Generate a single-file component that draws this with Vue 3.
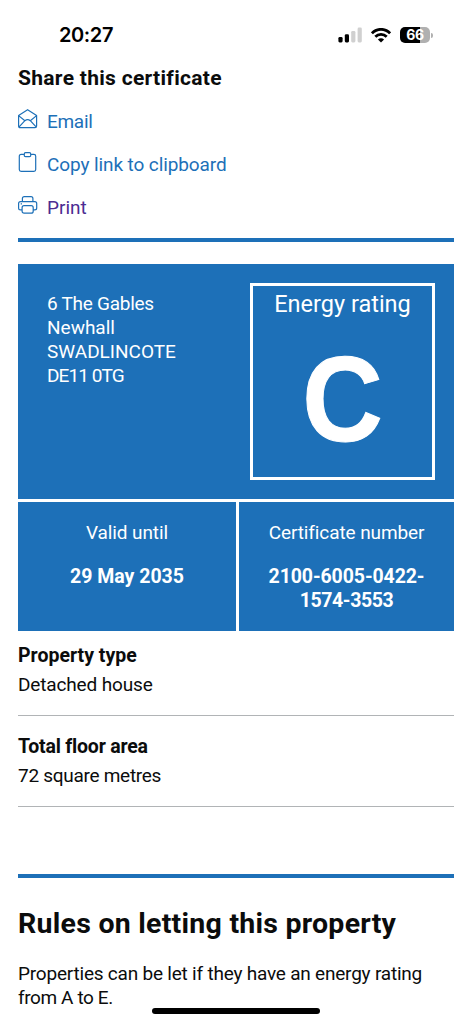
<script setup>
const address = [
  { text: '6 The Gables', name: 'street' },
  { text: 'Newhall', name: 'village' },
  { text: 'SWADLINCOTE', name: 'town' },
  { text: 'DE11 0TG', name: 'postcode' },
]
</script>

<template>
  <div class="screen">
    <header class="status">
      <span class="time">20:27</span>
      <div class="indicators">
        <svg class="signal" width="24" height="16" viewBox="0 0 24 16">
          <rect x="0.4" y="10" width="4.2" height="5.4" rx="1.3" fill="#000" />
          <rect x="6.8" y="7.2" width="4.2" height="8.2" rx="1.3" fill="#000" />
          <rect x="13.2" y="4" width="4.2" height="11.4" rx="1.3" fill="#d0d0d0" />
          <rect x="19.6" y="0.6" width="4.2" height="14.8" rx="1.3" fill="#d0d0d0" />
        </svg>
        <svg class="wifi" width="20" height="15" viewBox="0 0 20 15">
          <g fill="none" stroke="#000" stroke-width="2.8">
            <path d="M0.9 5.3C6 0 14 0 19.1 5.3" />
            <path d="M4.3 8.8C7.5 5.6 12.5 5.6 15.7 8.8" />
          </g>
          <path d="M10 14.6L6.9 11.5C8.6 9.9 11.4 9.9 13.1 11.5Z" fill="#000" />
        </svg>
        <div class="battery"><div class="cell">66</div><i class="cap"></i></div>
      </div>
    </header>

    <main>
      <h2 class="share-title">Share this certificate</h2>
      <ul class="share">
        <li>
          <svg width="20" height="20" viewBox="0 0 20 20">
            <path d="M.6 6.4L9.6.7l9 5.7v10.7q0 1.6-1.6 1.6H2.2Q.6 18.7.6 17.1ZM.6 6.6L6.9 11.7q2.7-2.1 5.4 0L18.6 6.6M.9 18.1L6.9 11.7M18.3 18.1L12.3 11.7" />
          </svg>
          <a class="email">Email</a>
        </li>
        <li>
          <svg width="20" height="20" viewBox="0 0 20 20">
            <path d="M5.7 2.4H3.1Q1.3 2.4 1.3 4.2V17.5Q1.3 19.3 3.1 19.3H15.9Q17.7 19.3 17.7 17.5V4.2Q17.7 2.4 15.9 2.4H13.3M7.5.7H11.5Q12.7.7 12.7 1.9V3.5Q12.7 4.7 11.5 4.7H7.5Q6.3 4.7 6.3 3.5V1.9Q6.3.7 7.5.7Z" />
          </svg>
          <a class="copy">Copy link to clipboard</a>
        </li>
        <li>
          <svg width="20" height="20" viewBox="0 0 20 20">
            <path d="M4.4 6.7V3.6Q4.4 1.7 6.3 1.7H13Q14.9 1.7 14.9 3.6V6.7M4.1 14.8H2.5Q.6 14.8.6 12.9V8.6Q.6 6.7 2.5 6.7H16.8Q18.7 6.7 18.7 8.6V12.9Q18.7 14.8 16.8 14.8H15.2M6.1 10.7H13.2Q15.2 10.7 15.2 12.7V16.2Q15.2 18.2 13.2 18.2H6.1Q4.1 18.2 4.1 16.2V12.7Q4.1 10.7 6.1 10.7ZM2.7 8.9H4" />
          </svg>
          <a class="print">Print</a>
        </li>
      </ul>

      <section class="certificate">
        <div class="overview">
          <address>
            <span v-for="line in address" :key="line.name" :class="line.name">{{ line.text }}</span>
          </address>
          <div class="rating">
            <p>Energy rating</p>
            <strong>C</strong>
          </div>
        </div>
        <div class="details">
          <div class="valid">
            <p>Valid until</p>
            <b>29 May 2035</b>
          </div>
          <div class="number">
            <p>Certificate number</p>
            <b>2100-6005-0422-<br /><span>1574-3553</span></b>
          </div>
        </div>
      </section>

      <dl>
        <div>
          <dt class="type">Property type</dt>
          <dd class="house">Detached house</dd>
        </div>
        <div>
          <dt class="floor">Total floor area</dt>
          <dd class="metres">72 square metres</dd>
        </div>
      </dl>

      <section class="rules">
        <h2>Rules on letting this property</h2>
        <p>Properties can be let if they have an energy rating<br /><span>from A to E.</span></p>
      </section>
    </main>
    <div class="home"></div>
  </div>
</template>

<style>
body {
  margin: 0;
  background: #fff;
}
</style>

<style scoped>
.screen {
  position: relative;
  width: 472px;
  height: 1024px;
  overflow: hidden;
  background: #fff;
  color: #0b0c0c;
  font: 19px/24px Roboto, "Open Sans", sans-serif;
}
h2, p, ul, dl, dd, address {
  margin: 0;
  padding: 0;
  font-style: normal;
}
.status {
  box-sizing: border-box;
  height: 66px;
  padding: 23px 39px 0 59px;
  display: flex;
  justify-content: space-between;
}
.time {
  font: 600 20px/25px Inter, sans-serif;
  letter-spacing: -0.4px;
  color: #000;
}
.indicators {
  display: flex;
  align-items: flex-start;
}
.signal {
  margin: 4px 9px 0 0;
}
.wifi {
  margin: 5px 9px 0 0;
}
.battery {
  display: flex;
  align-items: center;
  margin-top: 4px;
}
.cell {
  width: 30px;
  height: 16px;
  border-radius: 5px;
  background: linear-gradient(90deg, #000 66%, #b0b0b0 66%);
  color: #fff;
  font: 700 14px/16px Inter, sans-serif;
  letter-spacing: -0.4px;
  text-align: center;
}
.cap {
  width: 2px;
  height: 5px;
  margin-left: 1px;
  border-radius: 0 2px 2px 0;
  background: #b0b0b0;
}
main {
  padding: 0 18px;
}
.share-title {
  font-size: 21px;
  line-height: 24px;
  letter-spacing: 0.3px;
}
.share {
  list-style: none;
  margin-top: 19px;
  height: 129px;
}
.share li {
  display: flex;
  gap: 9px;
  height: 43px;
}
.share svg {
  flex: none;
  fill: none;
  stroke: #1d70b8;
  stroke-width: 1.2;
  stroke-linejoin: round;
}
.share a {
  padding-top: 1px;
  color: #1d70b8;
}
.share .email {
  letter-spacing: -0.3px;
}
.share .copy {
  letter-spacing: -0.1px;
}
.share .print {
  color: #4c2c92;
}
.certificate {
  border-top: 4px solid #1d70b8;
  padding-top: 22px;
  color: #fff;
}
.overview {
  display: flex;
  justify-content: space-between;
  height: 216px;
  padding: 19px 19px 0 29px;
  background: #1d70b8;
}
address {
  display: flex;
  flex-direction: column;
  padding-top: 9px;
}
.street {
  letter-spacing: -0.27px;
}
.postcode {
  letter-spacing: -0.9px;
}
.rating {
  box-sizing: border-box;
  width: 185px;
  height: 197px;
  border: 3px solid #fff;
  text-align: center;
}
.rating p {
  font-size: 23.5px;
  line-height: 30px;
  padding-top: 3px;
}
.rating strong {
  display: block;
  font: 700 120px/120px "Liberation Sans", sans-serif;
  margin-top: 20px;
  transform: scaleX(0.93);
  -webkit-text-stroke: 1px #fff;
}
.details {
  display: grid;
  grid-template-columns: 218px 1fr;
  gap: 3px;
  margin-top: 3px;
  text-align: center;
}
.details > div {
  box-sizing: border-box;
  height: 129px;
  padding-top: 19px;
  background: #1d70b8;
}
.details p {
  margin-bottom: 20px;
  letter-spacing: -0.1px;
}
.details b {
  display: block;
  font-size: 19.5px;
}
.number b {
  letter-spacing: -0.1px;
}
.number span {
  letter-spacing: -0.4px;
}
dl > div {
  box-sizing: border-box;
  height: 91px;
  border-bottom: 1px solid #b1b4b6;
  padding-top: 19px;
}
dl > div:first-child {
  height: 85px;
  padding-top: 13px;
}
dt {
  font-size: 19.5px;
  font-weight: 700;
  margin-bottom: 5px;
}
.floor {
  letter-spacing: -0.2px;
}
.house {
  letter-spacing: -0.15px;
}
.metres {
  letter-spacing: -0.28px;
}
.rules {
  margin-top: 67px;
  border-top: 4px solid #1d70b8;
  padding-top: 28px;
}
.rules h2 {
  font-size: 28.5px;
  line-height: 36px;
  letter-spacing: 0.25px;
  margin-bottom: 20px;
}
.rules p {
  white-space: nowrap;
  letter-spacing: -0.21px;
}
.rules span {
  letter-spacing: -0.4px;
}
.home {
  position: absolute;
  left: 152px;
  top: 1008px;
  width: 168px;
  height: 6px;
  border-radius: 3px;
  background: #000;
}
</style>
